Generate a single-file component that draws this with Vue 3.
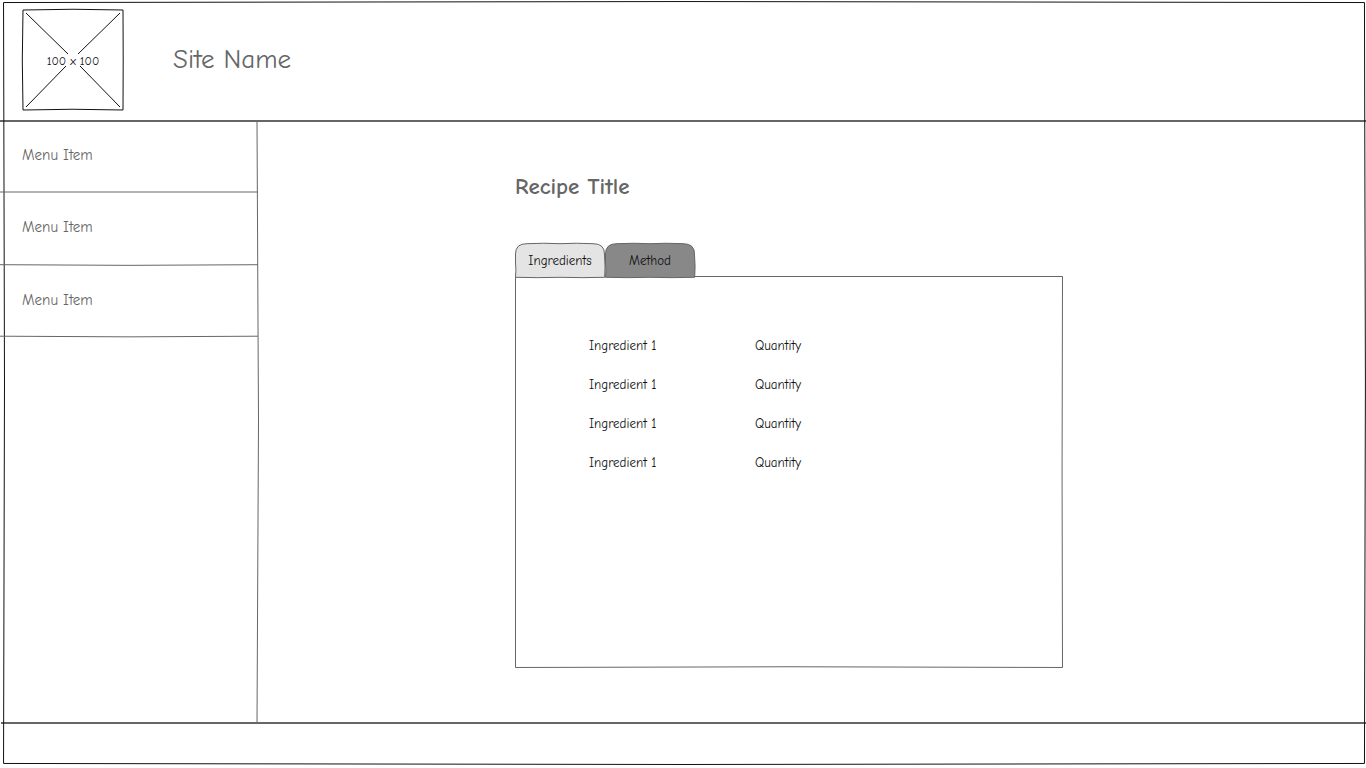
<script setup>
import { ref } from 'vue'

const menu = [
  { id: 1, label: 'Menu Item', line: 'M0 1 L100 1' },
  { id: 2, label: 'Menu Item', line: 'M0 0.7 Q50 2 100 0.7' },
  { id: 3, label: 'Menu Item', line: 'M0 0.2 Q50 1.5 100 0.2' }
]
const tabs = ['Ingredients', 'Method']
const selected = ref('Ingredients')
const rows = [1, 2, 3, 4].map((id) => ({ id, name: 'Ingredient 1', amount: 'Quantity' }))
</script>

<template>
  <div class="page">
    <svg class="frame" viewBox="0 0 100 100" preserveAspectRatio="none" aria-hidden="true">
      <path d="M0.04 0.07 Q50 -0.19 99.96 0.07 Q100.1 50 99.96 99.93 Q50 100.2 0.04 99.93 Q0.18 50 0.04 0.07Z" />
    </svg>

    <header class="header">
      <svg class="logo" viewBox="0 0 102 102" role="img" aria-labelledby="logo-size">
        <path d="M1 1 Q51 -0.5 101 1 Q101.4 51 101 101 Q51 99.5 1 101 Q-0.4 51 1 1Z" />
        <path class="cross" d="M4 4 L46 45 M98 4 L56 45 M4 98 L44 57 M98 98 L58 57" />
        <text id="logo-size" x="51" y="56" text-anchor="middle">100 x 100</text>
      </svg>
      <h1 class="site">Site Name</h1>
    </header>

    <div class="body">
      <nav class="sidebar">
        <svg class="side-line" viewBox="0 0 2 100" preserveAspectRatio="none" aria-hidden="true">
          <path d="M1 0 Q4 50 1 100" />
        </svg>
        <ul class="menu">
          <li v-for="item in menu" :key="item.id" class="item">
            <a href="#" class="link">{{ item.label }}</a>
            <svg class="item-line" viewBox="0 0 100 2" preserveAspectRatio="none" aria-hidden="true">
              <path :d="item.line" />
            </svg>
          </li>
        </ul>
      </nav>

      <main class="main">
        <article class="recipe">
          <h2 class="title">Recipe Title</h2>
          <div class="tabs" role="tablist">
            <button
              v-for="tab in tabs"
              :id="'tab-' + tab"
              :key="tab"
              type="button"
              role="tab"
              class="tab"
              :class="{ active: tab === selected }"
              :aria-selected="tab === selected"
              @click="selected = tab"
            >
              <svg class="tab-shape" viewBox="0 0 92 36" preserveAspectRatio="none" aria-hidden="true">
                <path d="M1.5 35.3 Q2.3 28 1.5 21 L1.5 12 Q1.5 1.5 13 1.7 Q30 0.8 46 1.7 Q62 0.8 79 1.7 Q91 1.5 90.5 13 Q91.5 24 90.7 35.3 Q68 36 46 35.3 Q23 36 1.5 35.3Z" />
              </svg>
              <span class="tab-label">{{ tab }}</span>
            </button>
          </div>
          <section class="panel" role="tabpanel" :aria-labelledby="'tab-' + selected">
            <svg class="panel-shape" viewBox="0 0 100 100" preserveAspectRatio="none" aria-hidden="true">
              <path d="M0.09 0.13 L99.91 0.13 Q99.75 50 99.91 99.87 Q50 99.5 0.09 99.87Z" />
            </svg>
            <table class="ingredients">
              <tbody>
                <tr v-for="row in rows" :key="row.id">
                  <td class="name">{{ row.name }}</td>
                  <td>{{ row.amount }}</td>
                </tr>
              </tbody>
            </table>
          </section>
        </article>
      </main>
    </div>

    <footer class="footer"></footer>
  </div>
</template>

<style>
body {
  margin: 0;
  background: #fff;
}
</style>

<style scoped>
.page {
  position: relative;
  display: flex;
  flex-direction: column;
  min-height: 100vh;
  box-sizing: border-box;
  overflow: hidden;
  font-family: "Comic Sans MS", "Comic Neue", Lato, sans-serif;
  font-size: 13px;
  color: #111;
}
svg {
  display: block;
  overflow: visible;
  fill: none;
  stroke: #666;
  stroke-width: 1px;
}
path {
  vector-effect: non-scaling-stroke;
}
.frame {
  position: absolute;
  top: 2px;
  left: 3px;
  width: calc(100% - 4px);
  height: calc(100% - 6px);
  stroke: #111;
  pointer-events: none;
}
.header {
  display: flex;
  align-items: center;
  gap: 49px;
  height: 120px;
  padding-left: 22px;
  border-bottom: 2px solid #666;
}
.logo {
  width: 102px;
  height: 102px;
  stroke: #111;
}
.logo text {
  fill: #111;
  stroke: none;
  font-size: 12px;
}
.site {
  margin: 0;
  font-size: 27px;
  line-height: 32px;
  font-weight: 400;
  color: #666;
}
.body {
  display: flex;
  flex: 1;
}
.sidebar {
  position: relative;
  flex: none;
  width: 258px;
}
.side-line {
  position: absolute;
  top: 0;
  right: 0;
  width: 2px;
  height: 100%;
}
.menu {
  margin: -1px 0 0;
  padding: 0;
  list-style: none;
}
.item {
  position: relative;
  height: 72px;
}
.item:nth-child(2) {
  height: 73px;
}
.link {
  display: block;
  padding-left: 22px;
  font-size: 15px;
  line-height: 69px;
  color: #666;
  text-decoration: none;
}
.item-line {
  position: absolute;
  left: 0;
  bottom: 0;
  width: 100%;
  height: 2px;
}
.main {
  flex: 1;
  padding: 51px 48px 40px 257px;
}
.recipe {
  max-width: 548px;
}
.title {
  margin: 0 0 42px;
  font-size: 23px;
  line-height: 28px;
  font-weight: 700;
  color: #666;
}
.tabs {
  display: flex;
  position: relative;
  z-index: 1;
}
.tab {
  position: relative;
  width: 90px;
  height: 34px;
  padding: 0;
  border: 0;
  background: none;
  color: #111;
  font: inherit;
  cursor: pointer;
}
.tab-shape {
  position: absolute;
  top: -1px;
  left: -1px;
  width: 92px;
  height: 36px;
  fill: #888;
}
.tab.active .tab-shape {
  fill: #e4e4e4;
}
.tab-label {
  position: relative;
}
.panel {
  position: relative;
  min-height: 392px;
  box-sizing: border-box;
  margin-top: -1px;
  padding: 50px 72px;
}
.panel-shape {
  position: absolute;
  top: 0;
  left: 0;
  width: 100%;
  height: 100%;
}
.ingredients {
  position: relative;
  border-collapse: collapse;
}
.ingredients td {
  height: 39px;
  padding: 0 2px;
  line-height: 18px;
}
.ingredients .name {
  width: 162px;
}
.footer {
  height: 44px;
  margin-left: 1px;
  border-top: 2px solid #666;
}
</style>
